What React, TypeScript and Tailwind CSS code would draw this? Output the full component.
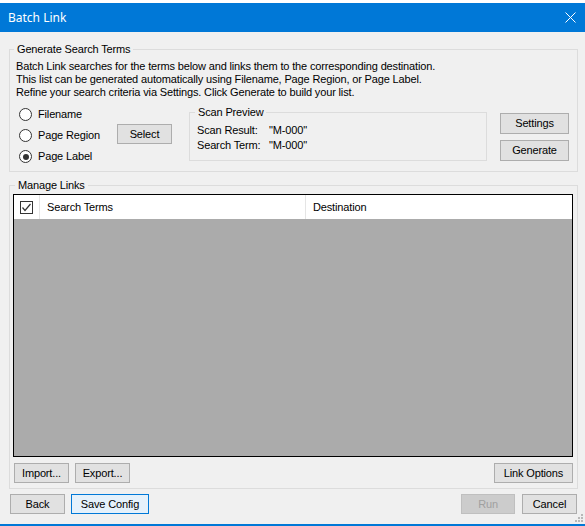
import React from "react";

function Btn({
  w,
  h = 20,
  children,
  variant = "normal",
  className = "",
}: {
  w: number;
  h?: number;
  children: React.ReactNode;
  variant?: "normal" | "focus" | "disabled";
  className?: string;
}) {
  const base =
    variant === "focus"
      ? "border-[#0078d7] bg-[#e5f1fb] text-black"
      : variant === "disabled"
      ? "border-[#bfbfbf] bg-[#cccccc] text-[#a0a0a0]"
      : "border-[#adadad] bg-[#e1e1e1] text-black";
  return (
    <div
      className={`box-border flex items-center justify-center border leading-none ${base} ${className}`}
      style={{ width: w, height: h }}
    >
      {children}
    </div>
  );
}

function Radio({ label, checked = false }: { label: string; checked?: boolean }) {
  return (
    <div className="flex h-[21px] items-center">
      <div className="box-border flex h-[13px] w-[13px] items-center justify-center rounded-full border border-[#333333] bg-white">
        {checked && <div className="h-[6px] w-[6px] rounded-full bg-[#333333]" />}
      </div>
      <span className="ml-[6px]">{label}</span>
    </div>
  );
}

export default function App() {
  return (
    <div className="flex h-[526px] w-[585px] flex-col bg-white font-['Liberation_Sans',Arial,sans-serif] text-[11px] tracking-[-0.15px] text-black">
      <div className="h-[3px] bg-white" />
      <div className="flex h-[29px] items-center justify-between bg-[#0078d7] pl-[8px] pr-[9px] text-white">
        <span className="font-['Noto_Sans',sans-serif] text-[12px] tracking-normal">Batch Link</span>
        <svg width="11" height="11" viewBox="0 0 11 11">
          <path d="M0.5 0.5 L10.5 10.5 M10.5 0.5 L0.5 10.5" stroke="white" strokeWidth="1" />
        </svg>
      </div>

      <div className="relative flex h-[492px] flex-col bg-[#f0f0f0] pl-[9px] pr-[7px] pt-[10px]">
        {/* Generate Search Terms */}
        <fieldset className="box-border h-[130px] border border-[#dcdcdc] p-0">
          <legend className="ml-[4px] px-[3px] leading-[14px]">Generate Search Terms</legend>
          <div className="flex flex-col pl-[6px] pt-[4px]">
            <div className="leading-[13px]">
              <div>Batch Link searches for the terms below and links them to the corresponding destination.</div>
              <div>This list can be generated automatically using Filename, Page Region, or Page Label.</div>
              <div>Refine your search criteria via Settings. Click Generate to build your list.</div>
            </div>
            <div className="mt-[5px] flex items-start">
              <div className="ml-[3px] flex w-[98px] flex-col">
                <Radio label="Filename" />
                <Radio label="Page Region" />
                <Radio label="Page Label" checked />
              </div>
              <Btn w={55} className="mt-[20px]">
                Select
              </Btn>
              <fieldset className="ml-[17px] mt-[1px] box-border h-[56px] w-[298px] border border-[#dcdcdc] p-0">
                <legend className="ml-[5px] px-[3px] leading-[14px]">Scan Preview</legend>
                <div className="flex flex-col pl-[7px] pt-[4px] leading-[15px]">
                  <div className="flex">
                    <span className="w-[72px]">Scan Result:</span>
                    <span>"M-000"</span>
                  </div>
                  <div className="flex">
                    <span className="w-[72px]">Search Term:</span>
                    <span>"M-000"</span>
                  </div>
                </div>
              </fieldset>
              <div className="ml-[13px] mt-[9px] flex flex-col gap-[6px]">
                <Btn w={69} h={21}>
                  Settings
                </Btn>
                <Btn w={69} h={21}>
                  Generate
                </Btn>
              </div>
            </div>
          </div>
        </fieldset>

        {/* Manage Links */}
        <fieldset className="mt-[6px] box-border h-[311px] border border-[#dcdcdc] p-0">
          <legend className="ml-[5px] px-[3px] leading-[14px]">Manage Links</legend>
          <div className="flex flex-col pl-[3px] pt-[2px]">
            <div className="box-border flex h-[263px] w-[560px] flex-col border border-black">
              <div className="flex h-[24px] bg-white">
                <div className="box-border flex w-[26px] items-center justify-end border-r border-[#e5e5e5] pr-[6px]">
                  <div className="box-border flex h-[13px] w-[13px] items-center justify-center border border-[#333333] bg-white">
                    <svg width="11" height="11" viewBox="0 0 11 11">
                      <path d="M1.5 5.5 L4 8.5 L9.5 2" stroke="#333333" strokeWidth="1.2" fill="none" />
                    </svg>
                  </div>
                </div>
                <div className="box-border flex w-[266px] items-center border-r border-[#e5e5e5] pl-[7px]">
                  Search Terms
                </div>
                <div className="flex flex-1 items-center pl-[7px]">Destination</div>
              </div>
              <div className="flex-1 bg-[#ababab]" />
            </div>
            <div className="mt-[6px] flex">
              <Btn w={55} className="ml-[1px]">
                Import...
              </Btn>
              <Btn w={55} className="ml-[6px]">
                Export...
              </Btn>
              <Btn w={79} className="ml-auto mr-[4px]">
                Link Options
              </Btn>
            </div>
          </div>
        </fieldset>

        {/* Bottom buttons */}
        <div className="mt-[5px] flex">
          <Btn w={55} className="ml-[1px]">
            Back
          </Btn>
          <Btn w={78} variant="focus" className="ml-[6px]">
            Save Config
          </Btn>
          <Btn w={54} variant="disabled" className="ml-auto">
            Run
          </Btn>
          <Btn w={55} className="ml-[7px] mr-[1px]">
            Cancel
          </Btn>
        </div>

        {/* size grip */}
        <svg className="absolute bottom-[2px] right-[2px]" width="8" height="8" viewBox="0 0 8 8">
          <rect x="6" y="0" width="2" height="2" fill="#b8b8b8" />
          <rect x="3" y="3" width="2" height="2" fill="#b8b8b8" />
          <rect x="6" y="3" width="2" height="2" fill="#b8b8b8" />
          <rect x="0" y="6" width="2" height="2" fill="#b8b8b8" />
          <rect x="3" y="6" width="2" height="2" fill="#b8b8b8" />
          <rect x="6" y="6" width="2" height="2" fill="#b8b8b8" />
        </svg>
      </div>
      <div className="h-[2px] bg-[#0078d7]" />
    </div>
  );
}
